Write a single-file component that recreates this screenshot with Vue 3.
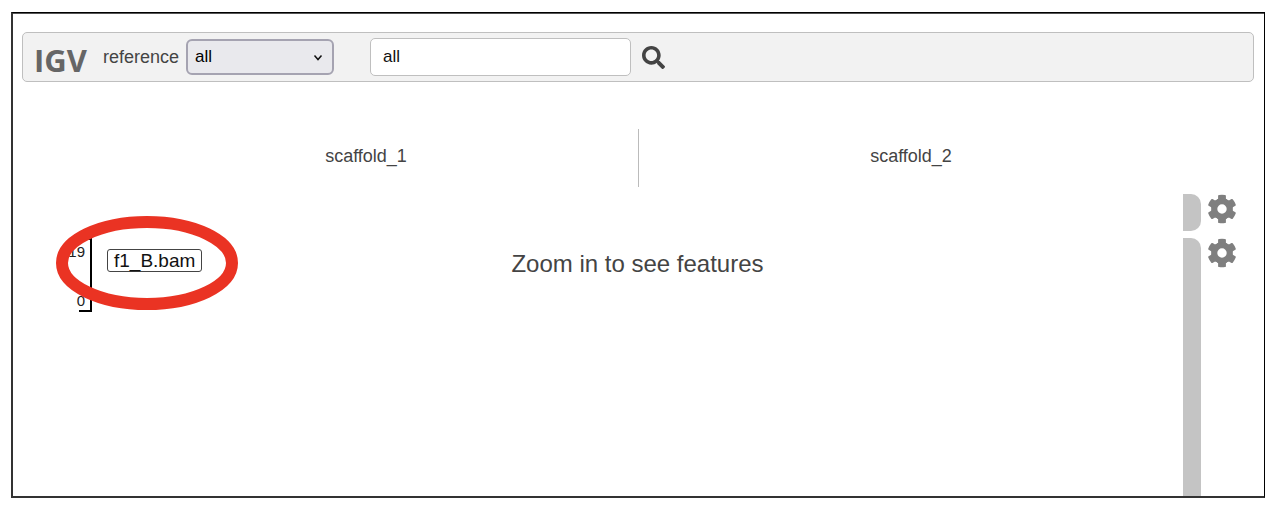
<script setup>
import { ref } from 'vue'

const chromosome = ref('all')
const locus = ref('all')
const regions = ['scaffold_1', 'scaffold_2']
const gearTeeth = [0, 60, 120, 180, 240, 300]
</script>

<template>
  <main class="frame">
    <form class="navbar" @submit.prevent>
      <span class="logo">IGV</span>
      <label class="genome" for="chromosome">reference</label>
      <span class="select-box">
        <select id="chromosome" v-model="chromosome">
          <option value="all">all</option>
        </select>
        <svg class="chevron" viewBox="0 0 10 7" aria-hidden="true">
          <path d="M1.5 1.5 L5 5.500 L8.500 1.5" fill="none" stroke="#111" stroke-width="1.5" />
        </svg>
      </span>
      <input v-model="locus" class="locus" type="text" aria-label="Locus" />
      <button class="search" type="submit" aria-label="Search">
        <svg viewBox="0 0 512 512" aria-hidden="true">
          <path
            fill="#444"
            d="M505 442.7L405.3 343c-4.500-4.500-10.600-7-17-7H372c27.600-35.300 44-79.700 44-128C416 93.100 322.900 0 208 0S0 93.100 0 208s93.100 208 208 208c48.300 0 92.700-16.400 128-44v16.300c0 6.400 2.500 12.500 7 17l99.700 99.700c9.400 9.400 24.600 9.400 33.900 0l28.300-28.300c9.400-9.400 9.400-24.600.1-34zM208 336c-70.700 0-128-57.200-128-128 0-70.700 57.200-128 128-128 70.700 0 128 57.200 128 128 0 70.700-57.200 128-128 128z"
          />
        </svg>
      </button>
    </form>

    <section class="browser">
      <header class="ideogram">
        <div v-for="name in regions" :key="name" class="region">{{ name }}</div>
      </header>

      <div v-for="track in ['ruler', 'alignment']" :key="track" class="track" :class="track">
        <div class="axis">
          <div v-if="track === 'alignment'" class="scale">
            <span>19</span>
            <span>0</span>
          </div>
        </div>
        <div class="viewport">
          <template v-if="track === 'alignment'">
            <button class="track-label" type="button">f1_B.bam</button>
            <p class="notice">Zoom in to see features</p>
            <svg class="highlight" viewBox="0 0 182 94" aria-hidden="true">
              <ellipse cx="91" cy="47" rx="85" ry="41" fill="none" stroke="#ea3323" stroke-width="12" />
            </svg>
          </template>
        </div>
        <div class="handle"></div>
        <button class="gear" type="button" aria-label="Track settings">
          <svg viewBox="-15 -15 30 30" aria-hidden="true">
            <g fill="#7f7f7f">
              <path
                v-for="angle in gearTeeth"
                :key="angle"
                :transform="`rotate(${angle})`"
                d="M-5.200 -9 L-3.900 -10.200 L-3.900 -13.200 Q-3.800 -14 -3 -14.100 Q0 -14.600 3 -14.100 Q3.800 -14 3.900 -13.200 L3.900 -10.200 L5.200 -9 L3 -7 H-3 Z"
              />
            </g>
            <circle r="7.700" fill="none" stroke="#7f7f7f" stroke-width="6" />
          </svg>
        </button>
      </div>
    </section>
  </main>
</template>

<style>
body {
  margin: 0;
  background: #fff;
}
</style>

<style scoped>
* {
  box-sizing: border-box;
}

.frame {
  display: flex;
  flex-direction: column;
  min-height: calc(100vh - 26px);
  margin: 12px 13px 14px 11px;
  padding: 19px 10px 0 9px;
  border: 2px solid #333;
  border-top: 1px solid #000;
  border-right: 1px solid #000;
  box-shadow: inset 0 1px #555;
  font-family: "Liberation Sans", Arial, sans-serif;
  color: #444;
}

.navbar {
  display: flex;
  align-items: center;
  height: 50px;
  padding: 0 11px;
  border: 1px solid #bfbfbf;
  border-radius: 5px;
  background: #f2f2f2;
  font-size: 18px;
}

.logo {
  width: 69px;
  padding-top: 6px;
  font: 700 31px/32px "Open Sans", sans-serif;
  color: #666;
}

.genome {
  width: 83px;
}

.select-box {
  position: relative;
  width: 148px;
  margin-right: 36px;
}

.select-box select {
  display: block;
  width: 100%;
  height: 36px;
  padding: 0 7px 2px;
  border: 2px solid #a5a3b1;
  border-radius: 6px;
  background: #e9e9ed;
  color: #000;
  font: 17px "Liberation Sans", Arial, sans-serif;
  appearance: none;
}

.chevron {
  position: absolute;
  top: 15px;
  right: 11px;
  width: 10px;
  height: 7px;
  pointer-events: none;
}

.locus {
  width: 261px;
  height: 38px;
  padding: 0 12px;
  border: 1px solid #bfbfbf;
  border-radius: 5px;
  background: #fff;
  color: #111;
  font: 17px "Liberation Sans", Arial, sans-serif;
}

button {
  padding: 0;
  border: 0;
  background: none;
  font-family: inherit;
}

.search {
  margin-left: 11px;
}

.search svg {
  display: block;
  width: 23px;
  height: 23px;
}

.browser {
  display: flex;
  flex: 1;
  flex-direction: column;
  padding-top: 47px;
}

.ideogram {
  display: flex;
  height: 58px;
  margin: 0 71px 7px 72px;
}

.region {
  flex: 1;
  font-size: 18px;
  line-height: 55px;
  text-align: center;
}

.region + .region {
  border-left: 1px solid #bbb;
}

.track {
  display: flex;
}

.ruler {
  height: 37px;
  margin-bottom: 7px;
}

.alignment {
  flex: 1;
  min-height: 80px;
}

.axis {
  display: flex;
  flex: 0 0 70px;
  justify-content: flex-end;
}

.scale {
  display: flex;
  flex-direction: column;
  justify-content: space-between;
  width: 24px;
  height: 74px;
  padding: 4px 5px 1px 0;
  border-right: 2px solid #000;
  background:
    linear-gradient(#000, #000) top right / 11px 2px no-repeat,
    linear-gradient(#000, #000) bottom right / 11px 2px no-repeat;
  color: #222;
  font-size: 15px;
  line-height: 20px;
  text-align: right;
}

.viewport {
  position: relative;
  flex: 1;
}

.track-label {
  position: absolute;
  top: 11px;
  left: 15px;
  height: 23px;
  padding: 0 6px;
  border: 1px solid #444;
  border-radius: 3px;
  background: #fff;
  color: #111;
  font-size: 19px;
  line-height: 19px;
}

.notice {
  margin: 0;
  font-size: 24px;
  line-height: 52px;
  text-align: center;
}

.highlight {
  position: absolute;
  top: -22px;
  left: -36px;
  width: 182px;
  height: 94px;
  pointer-events: none;
}

.handle {
  width: 18px;
  border-radius: 0 10px 10px 0;
  background: #c4c4c4;
}

.alignment .handle {
  border-radius: 0 10px 0 0;
}

.gear {
  align-self: flex-start;
  margin: 0 17px 0 6px;
}

.gear svg {
  display: block;
  width: 30px;
  height: 30px;
}
</style>
